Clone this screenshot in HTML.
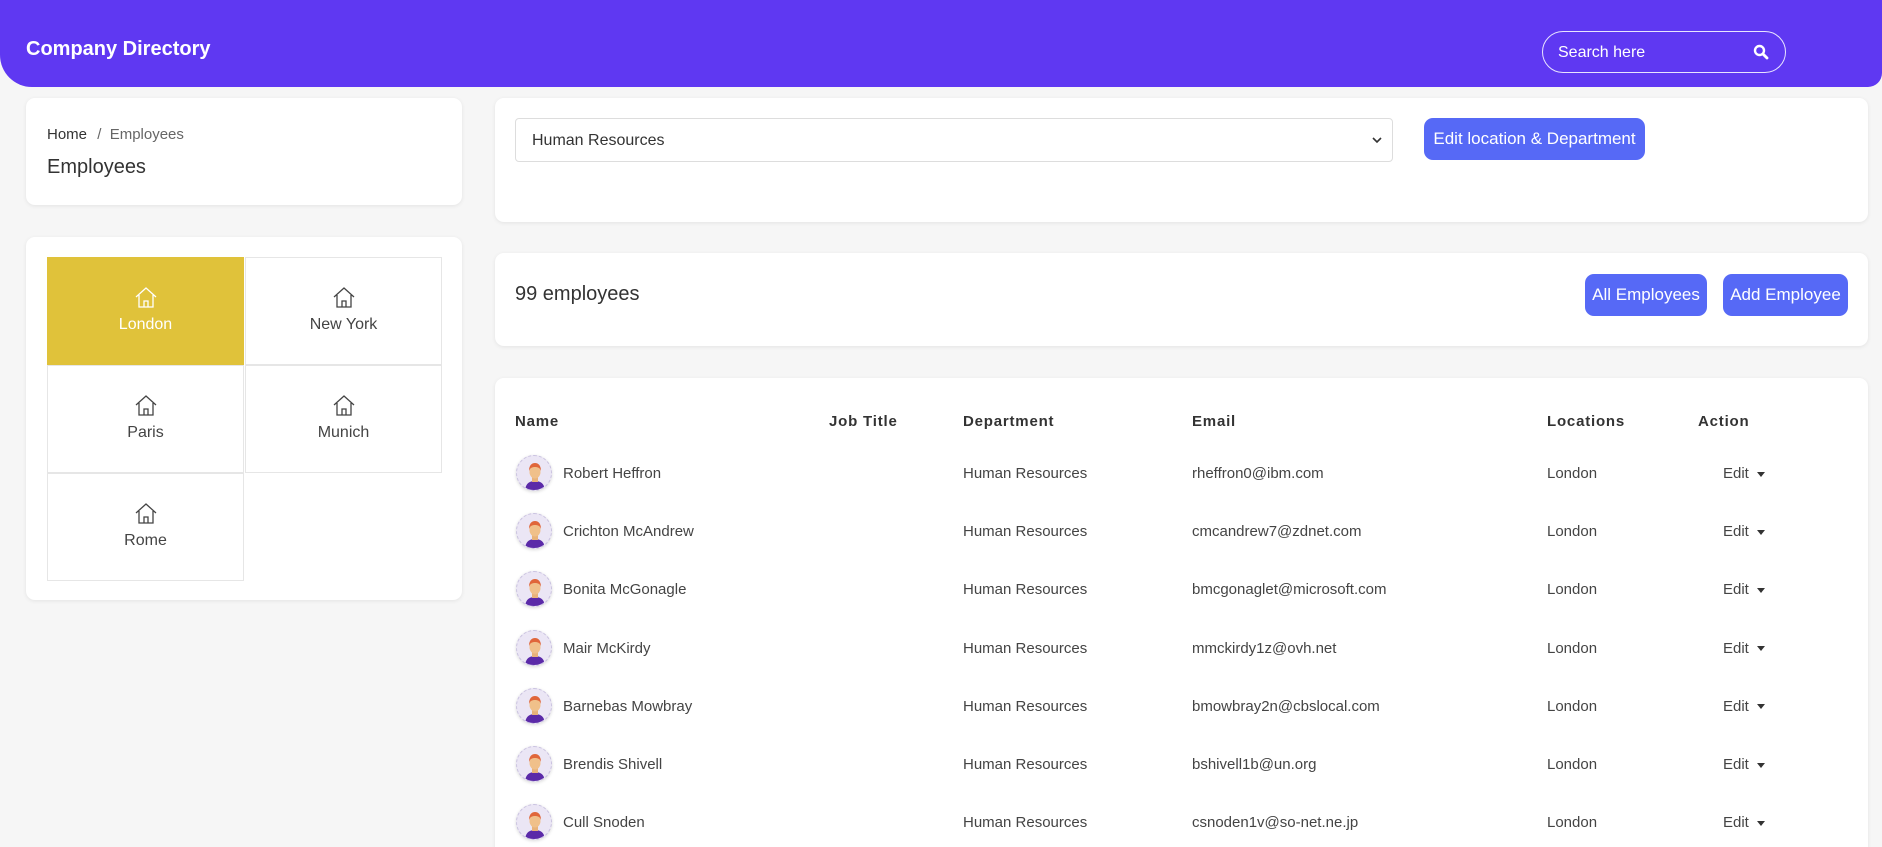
<!DOCTYPE html>
<html><head><meta charset="utf-8"><style>
*{box-sizing:border-box;margin:0;padding:0}
html,body{width:1882px;height:847px;overflow:hidden}
body{background:#f6f6f6;font-family:"Liberation Sans",sans-serif;color:#333}
#wrap{position:relative;width:1882px;height:847px;overflow:hidden}
.hdr{position:absolute;left:0;top:0;width:1882px;height:87px;background:#5f38f2;border-radius:0 0 14px 32px}
.hdr .t{position:absolute;left:26px;top:38px;color:#fff;font-weight:bold;font-size:20px}
.search{position:absolute;left:1542px;top:31px;width:244px;height:42px;border:1.5px solid #e8e4ff;border-radius:21px;color:#fff;font-size:16px;padding:12px 0 0 15px}
.card{position:absolute;background:#fff;border-radius:9px;box-shadow:0 1px 4px rgba(0,0,0,.08)}
.btn{position:absolute;background:#5669f6;color:#fff;border-radius:9px;font-size:17px;text-align:center}
.grid{position:absolute;left:47px;top:257px;width:396px}
.cell{position:absolute;width:197px;height:108px;border:1px solid #e6e6e6;text-align:center;font-size:16px;color:#444}
.cell svg{display:block;margin:28px auto 8px}
.th{position:absolute;top:413px;font-weight:bold;font-size:15px;letter-spacing:.8px;color:#333}
.td{position:absolute;font-size:15px;color:#444}
.av{position:absolute;left:516px;width:36px;height:36px;border-radius:50%;background:#ebe6f5;border:1px dashed #c9c1e0;overflow:hidden;box-shadow:0 1px 3px rgba(0,0,0,.15)}
</style></head><body><div id="wrap">
<div class="hdr"><div class="t">Company Directory</div>
<div class="search">Search here
<svg style="position:absolute;right:16px;top:12px" width="16" height="16" viewBox="0 0 16 16"><circle cx="6.5" cy="6.5" r="4.5" fill="none" stroke="#fff" stroke-width="2.4"/><path d="M10 10l4 4" stroke="#fff" stroke-width="2.8" stroke-linecap="round"/></svg></div></div>

<div class="card" style="left:26px;top:98px;width:436px;height:107px">
<div style="position:absolute;left:21px;top:28px;font-size:15px;color:#333">Home <span style="color:#666;margin-left:6px">/&nbsp; Employees</span></div>
<div style="position:absolute;left:21px;top:58px;font-size:20px;color:#333">Employees</div></div>

<div class="card" style="left:26px;top:237px;width:436px;height:363px"></div>
<div class="grid">
<div class="cell" style="left:0;top:0;background:#e0c23a;border-color:#e0c23a;color:#fff"><svg width="24" height="22" viewBox="0 0 24 22"><path d="M2 11L12 2l10 9M5 9v12h14V9M10 21v-6h4v6" fill="none" stroke="#fff" stroke-width="1.3"/></svg>London</div>
<div class="cell" style="left:198px;top:0"><svg width="24" height="22" viewBox="0 0 24 22"><path d="M2 11L12 2l10 9M5 9v12h14V9M10 21v-6h4v6" fill="none" stroke="#444" stroke-width="1.3"/></svg>New York</div>
<div class="cell" style="left:0;top:108px"><svg width="24" height="22" viewBox="0 0 24 22"><path d="M2 11L12 2l10 9M5 9v12h14V9M10 21v-6h4v6" fill="none" stroke="#444" stroke-width="1.3"/></svg>Paris</div>
<div class="cell" style="left:198px;top:108px"><svg width="24" height="22" viewBox="0 0 24 22"><path d="M2 11L12 2l10 9M5 9v12h14V9M10 21v-6h4v6" fill="none" stroke="#444" stroke-width="1.3"/></svg>Munich</div>
<div class="cell" style="left:0;top:216px"><svg width="24" height="22" viewBox="0 0 24 22"><path d="M2 11L12 2l10 9M5 9v12h14V9M10 21v-6h4v6" fill="none" stroke="#444" stroke-width="1.3"/></svg>Rome</div>
</div>

<div class="card" style="left:495px;top:98px;width:1373px;height:124px"></div>
<div style="position:absolute;left:515px;top:118px;width:878px;height:44px;border:1px solid #ddd;border-radius:4px;background:#fff;font-size:16px;padding:13px 0 0 16px;color:#333">Human Resources
<svg style="position:absolute;right:10px;top:18px" width="10" height="7" viewBox="0 0 10 7"><path d="M1 1l4 4 4-4" fill="none" stroke="#333" stroke-width="1.6"/></svg></div>
<div class="btn" style="left:1424px;top:118px;width:221px;height:42px;line-height:42px">Edit location &amp; Department</div>

<div class="card" style="left:495px;top:253px;width:1373px;height:93px"></div>
<div style="position:absolute;left:515px;top:283px;font-size:20px;color:#333">99 employees</div>
<div class="btn" style="left:1585px;top:274px;width:122px;height:42px;line-height:42px">All Employees</div>
<div class="btn" style="left:1723px;top:274px;width:125px;height:42px;line-height:42px">Add Employee</div>

<div class="card" style="left:495px;top:378px;width:1373px;height:500px"></div>
<div class="th" style="left:515px">Name</div>
<div class="th" style="left:829px">Job Title</div>
<div class="th" style="left:963px">Department</div>
<div class="th" style="left:1192px">Email</div>
<div class="th" style="left:1547px">Locations</div>
<div class="th" style="left:1698px">Action</div>

<div id="rows"></div>
</div>
<script>
var d=[["Robert Heffron","rheffron0@ibm.com"],["Crichton McAndrew","cmcandrew7@zdnet.com"],["Bonita McGonagle","bmcgonaglet@microsoft.com"],["Mair McKirdy","mmckirdy1z@ovh.net"],["Barnebas Mowbray","bmowbray2n@cbslocal.com"],["Brendis Shivell","bshivell1b@un.org"],["Cull Snoden","csnoden1v@so-net.ne.jp"]];
var h="";
d.forEach(function(r,i){var y=473+i*58.2;var t=y-8;
h+='<div class="av" style="top:'+(y-18)+'px"><svg width="36" height="36" viewBox="0 0 36 36"><path d="M8 36c0-8 4-11 10-11s10 3 10 11z" fill="#5b2aa8"/><rect x="15" y="20" width="6" height="6" fill="#e8b27a"/><ellipse cx="18" cy="16" rx="5.5" ry="6.5" fill="#f0c08a"/><path d="M12 15c0-6 3-8 6-8s6 2 6 8c-1-3-3-4-6-4s-5 1-6 4z" fill="#e0663a"/></svg></div>';
h+='<div class="td" style="left:563px;top:'+t+'px">'+r[0]+'</div>';
h+='<div class="td" style="left:963px;top:'+t+'px">Human Resources</div>';
h+='<div class="td" style="left:1192px;top:'+t+'px">'+r[1]+'</div>';
h+='<div class="td" style="left:1547px;top:'+t+'px">London</div>';
h+='<div class="td" style="left:1723px;top:'+t+'px">Edit <span style="display:inline-block;width:0;height:0;border-left:4px solid transparent;border-right:4px solid transparent;border-top:5px solid #333;vertical-align:middle;margin-left:4px"></span></div>';
});
document.getElementById("rows").innerHTML=h;
</script>
</body></html>
